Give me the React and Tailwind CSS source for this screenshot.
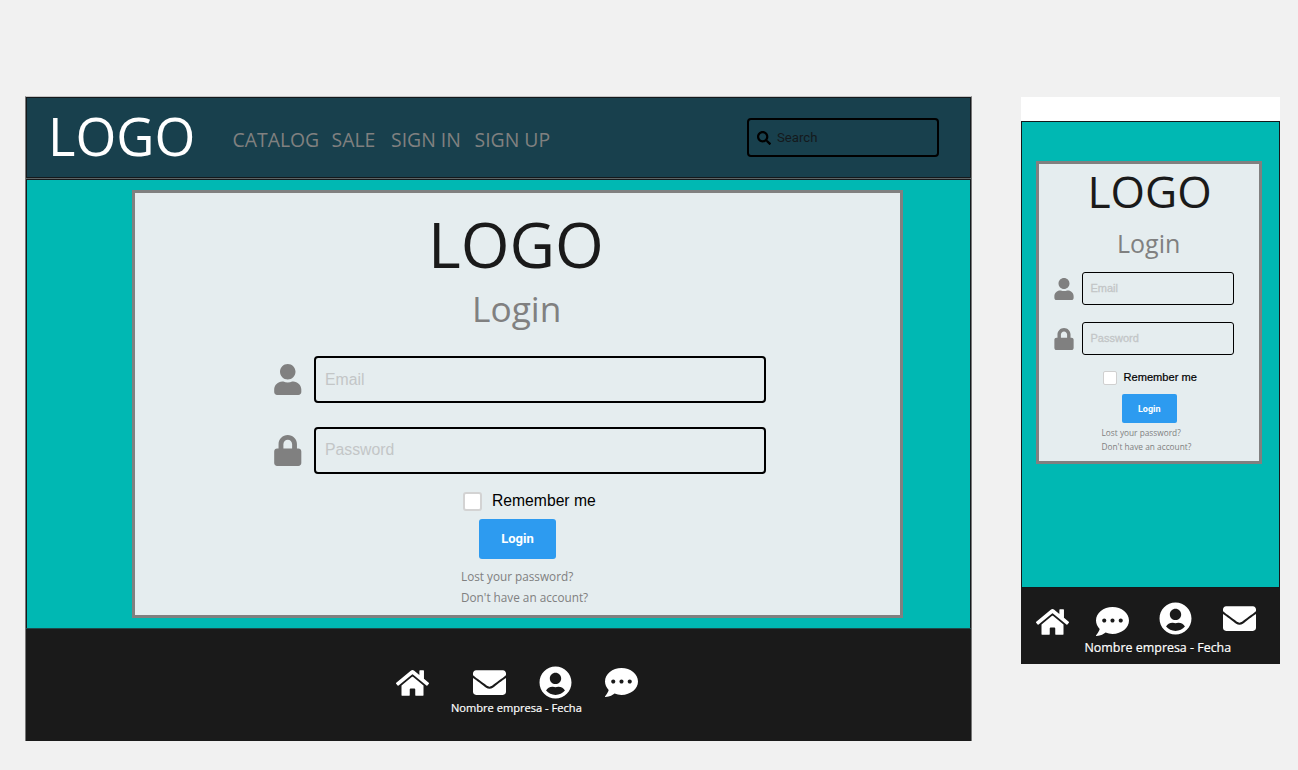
import { FaHome, FaEnvelope, FaUserCircle, FaCommentDots, FaUser, FaLock, FaSearch } from "react-icons/fa";

const openSans = "font-['Open_Sans',sans-serif] whitespace-nowrap";
const arial = "font-['Liberation_Sans',sans-serif] whitespace-nowrap";
const roboto = "font-['Roboto',sans-serif] whitespace-nowrap";

function DesktopHeader() {
  return (
    <header className="flex h-[81px] items-start border border-[#14191c] bg-[#18404d]">
      <div className={`${openSans} ml-[21px] mt-[8px] w-[184.5px] text-[52.5px] leading-[60px] text-white`}>LOGO</div>
      <nav className={`${openSans} mt-[28px] flex text-[19.4px] leading-[28px] text-[#808080]`}>
        <a className="w-[99px]">CATALOG</a>
        <a className="w-[59.5px]">SALE</a>
        <a className="w-[83.5px]">SIGN IN</a>
        <a>SIGN UP</a>
      </nav>
      <div className="ml-auto mr-[31px] mt-[20px] flex h-[39px] w-[192px] items-center rounded-[4px] border-2 border-black pl-[7.5px]">
        <FaSearch className="h-[14px] w-[14px] text-black" />
        <span className={`${roboto} ml-[6.5px] text-[13.2px] leading-[16px] text-[#14191c]`}>Search</span>
      </div>
    </header>
  );
}

function DesktopCard() {
  return (
    <section className="ml-[105px] mt-[10px] flex h-[428px] w-[771px] flex-col border-[3px] border-[#808080] bg-[#e5edef]">
      <h1 className={`${openSans} ml-[293px] mt-[16px] h-[70px] text-[62.7px] leading-[70px] text-[#1a1a1a]`}>LOGO</h1>
      <h2 className={`${openSans} ml-[337px] mt-[7px] h-[44px] text-[35.3px] leading-[44px] text-[#808080]`}>Login</h2>
      <div className="ml-[139px] mt-[26px] flex items-start">
        <FaUser className="mt-[8px] h-[31px] w-[27.5px] text-[#808080]" />
        <div className={`${arial} ml-[12px] flex h-[47px] w-[452px] items-center rounded-[4px] border-2 border-black pl-[9.5px] text-[15.8px] leading-[20px] text-[#c3c6c7]`}>
          Email
        </div>
      </div>
      <div className="ml-[139px] mt-[24px] flex items-start">
        <FaLock className="mt-[8px] h-[31px] w-[27.5px] text-[#808080]" />
        <div className={`${arial} ml-[12px] flex h-[47px] w-[452px] items-center rounded-[4px] border-2 border-black pb-[2px] pl-[9.5px] text-[15.8px] leading-[20px] text-[#c3c6c7]`}>
          Password
        </div>
      </div>
      <label className={`${arial} ml-[328px] mt-[17px] flex h-[20px] items-center text-[15.7px] leading-[20px] text-black`}>
        <span className="mr-[10px] h-[19px] w-[19px] rounded-[3px] border-2 border-[#d3d3d3] bg-white" />
        Remember me
      </label>
      <button className={`${roboto} ml-[344px] mt-[8px] h-[40px] w-[77px] shrink-0 rounded-[3px] bg-[#2d9bf0] text-[13px] font-bold leading-[16px] text-white`}>
        Login
      </button>
      <a className={`${openSans} ml-[326px] mt-[7px] text-[11.75px] leading-[21px] text-[#808080]`}>Lost your password?</a>
      <a className={`${openSans} ml-[326px] text-[11.75px] leading-[21px] text-[#808080]`}>Don't have an account?</a>
    </section>
  );
}

function DesktopFooter() {
  return (
    <footer className="h-[113px] border-t border-[#20474a] bg-[#1a1a1a] text-white">
      <div className="flex h-[71px] items-start pl-[370px]">
        <FaHome className="mt-[39px] h-[30px] w-[33px]" />
        <FaEnvelope className="ml-[43.5px] mt-[37px] h-[33px] w-[33px]" />
        <FaUserCircle className="ml-[33.5px] mt-[37px] h-[33px] w-[33px]" />
        <FaCommentDots className="ml-[33px] mt-[37px] h-[33px] w-[33px]" />
      </div>
      <p className={`${openSans} pl-[425px] text-[11.1px] font-medium leading-[16px] [-webkit-text-stroke:0.2px_#fff]`}>
        Nombre empresa - Fecha
      </p>
    </footer>
  );
}

function MobileCard() {
  return (
    <section className="ml-[14px] mt-[39px] flex h-[303px] w-[226px] flex-col border-[3px] border-[#808080] bg-[#e5edef]">
      <h1 className={`${openSans} ml-[48.5px] mt-[2px] h-[50px] text-[44.3px] leading-[50px] text-[#1a1a1a]`}>LOGO</h1>
      <h2 className={`${openSans} ml-[78px] mt-[11px] h-[32px] text-[25px] leading-[32px] text-[#808080]`}>Login</h2>
      <div className="ml-[15px] mt-[13px] flex items-start">
        <FaUser className="mt-[6px] h-[22px] w-[20px] text-[#808080]" />
        <div className={`${arial} ml-[8px] flex h-[33px] w-[152px] items-center rounded-[3px] border-[1.5px] border-black pb-[1px] pl-[7.5px] text-[11px] leading-[14px] text-[#c3c6c7] [-webkit-text-stroke:0.3px_#c3c6c7]`}>
          Email
        </div>
      </div>
      <div className="ml-[15px] mt-[17px] flex items-start">
        <FaLock className="mt-[6px] h-[22px] w-[20px] text-[#808080]" />
        <div className={`${arial} ml-[8px] flex h-[33px] w-[152px] items-center rounded-[3px] border-[1.5px] border-black pb-[1px] pl-[7.5px] text-[11px] leading-[14px] text-[#c3c6c7] [-webkit-text-stroke:0.3px_#c3c6c7]`}>
          Password
        </div>
      </div>
      <label className={`${arial} ml-[64px] mt-[16px] flex h-[14px] items-center text-[11.1px] leading-[14px] text-black [-webkit-text-stroke:0.2px_#000]`}>
        <span className="mr-[6.5px] h-[14px] w-[14px] rounded-[2px] border border-[#d0d0d0] bg-white" />
        <span className="-mt-[2px]">Remember me</span>
      </label>
      <button className={`${roboto} ml-[83px] mt-[9px] h-[29px] w-[54.5px] shrink-0 rounded-[2px] bg-[#2d9bf0] text-[9px] font-bold leading-[12px] text-white`}>
        Login
      </button>
      <a className={`${openSans} ml-[62.5px] mt-[3px] text-[8.3px] leading-[14px] text-[#808080]`}>Lost your password?</a>
      <a className={`${openSans} ml-[62.5px] text-[8.3px] leading-[14px] text-[#808080]`}>Don't have an account?</a>
    </section>
  );
}

function MobileFooter() {
  return (
    <footer className="h-[76px] bg-[#1a1a1a] text-white">
      <div className="flex h-[52px] items-start pl-[15px]">
        <FaHome className="mt-[19px] h-[30px] w-[33px]" />
        <FaCommentDots className="ml-[26.5px] mt-[17px] h-[33px] w-[33px]" />
        <FaUserCircle className="ml-[30.5px] mt-[14px] h-[33px] w-[33px]" />
        <FaEnvelope className="ml-[31px] mt-[14px] h-[33px] w-[33px]" />
      </div>
      <p className={`${openSans} pl-[63.5px] text-[12.45px] font-medium leading-[16px] [-webkit-text-stroke:0.2px_#fff]`}>
        Nombre empresa - Fecha
      </p>
    </footer>
  );
}

export default function App() {
  return (
    <main className="flex h-[770px] w-[1298px] items-start bg-[#f1f1f1] pl-[25px] pt-[96px]">
      <div className="w-[947px] border-x border-t border-x-[#777777] border-t-[#c4c4c4]">
        <DesktopHeader />
        <div className="h-px bg-[#5c6465]" />
        <div className="flex h-[449px] items-start border-x border-t border-[#14191c] bg-[#00b8b3]">
          <DesktopCard />
        </div>
        <DesktopFooter />
      </div>
      <div className="ml-[49px] mt-px w-[259px]">
        <div className="h-[24px] bg-white" />
        <div className="flex h-[467px] items-start border border-[#14191c] bg-[#00b8b3]">
          <MobileCard />
        </div>
        <MobileFooter />
      </div>
    </main>
  );
}
